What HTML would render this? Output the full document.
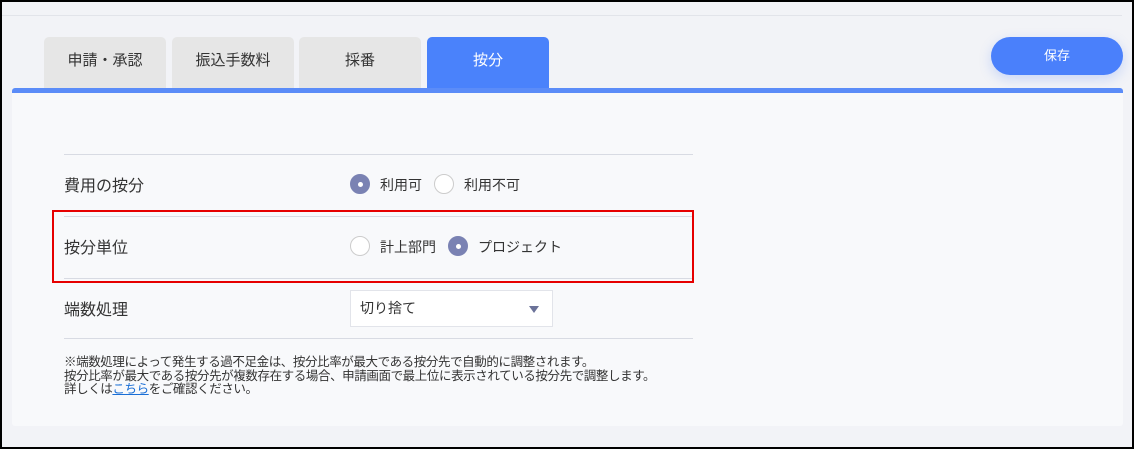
<!DOCTYPE html>
<html><head><meta charset="utf-8"><style>
*{margin:0;padding:0;box-sizing:border-box}
body{width:1134px;height:449px;background:#000;font-family:"Liberation Sans","Noto Sans CJK JP",sans-serif;color:#333;position:relative;overflow:hidden}
.frame{position:absolute;left:2px;top:2px;width:1130px;height:445px;background:#f2f3f7}
.abs{position:absolute}
.tab{position:absolute;top:37px;height:52px;width:122px;background:#e6e6e6;border-radius:5px 5px 0 0;text-align:center;line-height:48px;font-size:15px;color:#333}
.panel{position:absolute;left:12px;top:88px;width:1111px;height:338px;background:#f8f9fb;border-top:5px solid #5b8cf8;border-radius:3px}
.line{position:absolute;left:64px;width:629px;height:1px;background:#d8dbe3}
.lbl{position:absolute;left:64px;font-size:16px;color:#333}
.r{position:absolute;width:20px;height:20px;border-radius:50%;border:1px solid #ccc;background:#fff}
.r.on{background:#7a82b3;border-color:#7a82b3}
.r.on::after{content:"";position:absolute;left:6.5px;top:6.5px;width:5px;height:5px;border-radius:50%;background:#fff}
.rt{position:absolute;font-size:14px;color:#333}
</style></head><body>
<div class="frame"></div>
<div class="abs" style="left:2px;top:15px;width:1120px;height:1px;background:#e2e4ea"></div>
<div class="tab" style="left:44px">申請・承認</div>
<div class="tab" style="left:172px">振込手数料</div>
<div class="tab" style="left:299px">採番</div>
<div class="tab" style="left:427px;background:#4a82fb;color:#fff">按分</div>
<div class="abs" style="left:991px;top:37px;width:132px;height:38px;border-radius:19px;background:#4a80fb;color:#fff;font-size:13px;text-align:center;line-height:37px;box-shadow:0 4px 12px rgba(74,128,251,.25)">保存</div>
<div class="panel"></div>
<div class="line" style="top:154px"></div>
<div class="lbl" style="top:172px">費用の按分</div>
<div class="r on" style="left:350px;top:174px"></div><div class="rt" style="left:380px;top:175px">利用可</div>
<div class="r" style="left:434px;top:174px"></div><div class="rt" style="left:464px;top:175px">利用不可</div>
<div class="line" style="top:216px"></div>
<div class="lbl" style="top:234px">按分単位</div>
<div class="r" style="left:350px;top:236px"></div><div class="rt" style="left:380px;top:237px">計上部門</div>
<div class="r on" style="left:448px;top:236px"></div><div class="rt" style="left:478px;top:237px">プロジェクト</div>
<div class="line" style="top:278px"></div>
<div class="abs" style="left:52px;top:210px;width:642px;height:73px;border:2px solid #e60000"></div>
<div class="lbl" style="top:296px">端数処理</div>
<div class="abs" style="left:350px;top:290px;width:203px;height:37px;background:#fff;border:1px solid #e2e4ea;font-size:14px;line-height:35px;padding-left:9px">切り捨て<span style="position:absolute;right:13px;top:15px;width:0;height:0;border-left:5px solid transparent;border-right:5px solid transparent;border-top:7px solid #6b7299"></span></div>
<div class="line" style="top:338px"></div>
<div class="abs" style="left:64px;top:356px;font-size:12.5px;line-height:13.5px;color:#333;letter-spacing:-0.4px">※端数処理によって発生する過不足金は、按分比率が最大である按分先で自動的に調整されます。<br>按分比率が最大である按分先が複数存在する場合、申請画面で最上位に表示されている按分先で調整します。<br>詳しくは<span style="color:#1a6fd6;text-decoration:underline">こちら</span>をご確認ください。</div>
</body></html>
